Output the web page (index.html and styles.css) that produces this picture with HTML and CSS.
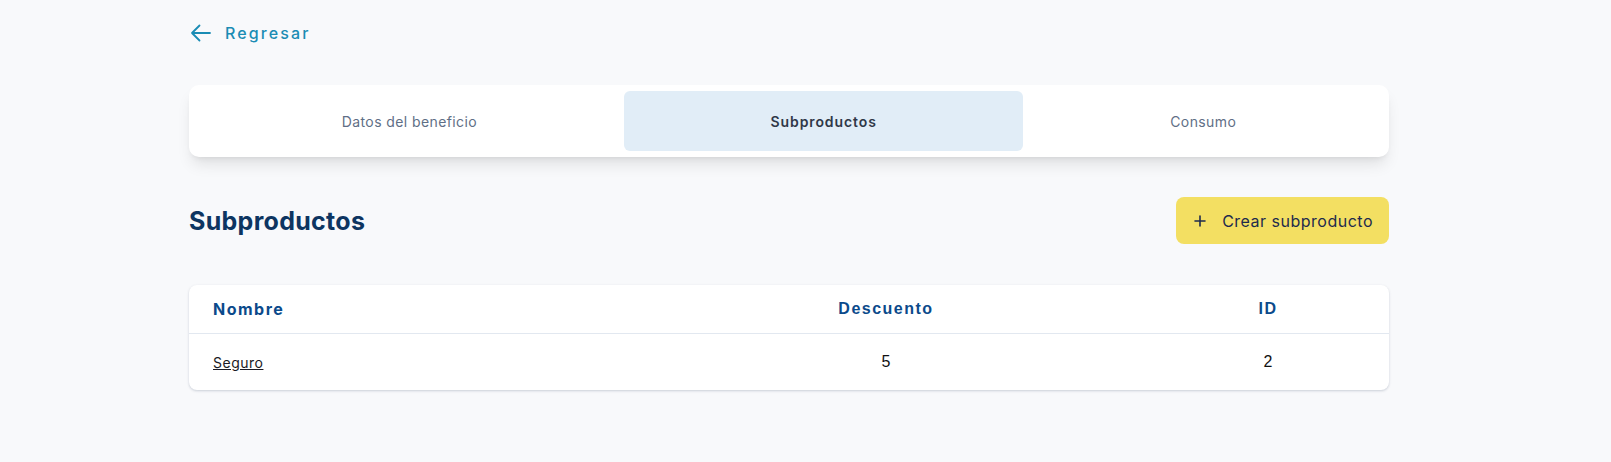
FILE: index.html
```html
<!DOCTYPE html>
<html lang="es">
<head>
<meta charset="utf-8">
<title>Subproductos</title>
<link rel="stylesheet" href="styles.css">
</head>
<body>
<main class="page">
  <a class="back" href="#">
    <svg class="back-icon" width="24" height="24" viewBox="0 0 24 24" fill="none" stroke="currentColor" stroke-width="1.8" stroke-linecap="round" stroke-linejoin="round"><path d="M10.5 19.5L3 12l7.5-7.5M3 12h18"/></svg>
    <span class="back-text">Regresar</span>
  </a>

  <nav class="tabs">
    <button class="tab">Datos del beneficio</button>
    <button class="tab tab-active">Subproductos</button>
    <button class="tab">Consumo</button>
  </nav>

  <div class="section-head">
    <h1 class="title">Subproductos</h1>
    <button class="btn-create">
      <svg class="plus" width="12" height="12" viewBox="0 0 12 12" fill="none" stroke="currentColor" stroke-width="1.6" stroke-linecap="round"><path d="M6 1v10M1 6h10"/></svg>
      <span>Crear subproducto</span>
    </button>
  </div>

  <div class="table-card">
    <div class="row row-head">
      <div class="cell cell-name">Nombre</div>
      <div class="cell cell-center alt">Descuento</div>
      <div class="cell cell-center alt">ID</div>
    </div>
    <div class="row row-body">
      <div class="cell cell-name"><a class="link" href="#">Seguro</a></div>
      <div class="cell cell-center num">5</div>
      <div class="cell cell-center num">2</div>
    </div>
  </div>
</main>
</body>
</html>
```

FILE: styles.css
```css
* { box-sizing: border-box; }

html, body {
  margin: 0;
  background: #f8f9fb;
}

body {
  font-family: Inter, "Noto Sans", sans-serif;
  color: #1e2b4d;
}

.page {
  width: 1200px;
  margin-left: 189px;
  padding-top: 21px;
  padding-bottom: 60px;
}

.back {
  display: flex;
  align-items: center;
  gap: 12px;
  height: 24px;
  color: #1a8cb4;
  text-decoration: none;
}

.back-icon { display: block; }

.back-text {
  font-size: 16px;
  font-weight: 500;
  letter-spacing: 2.1px;
  line-height: 24px;
}

.tabs {
  margin-top: 40px;
  display: flex;
  padding: 6px;
  background: #ffffff;
  border-radius: 10px;
  box-shadow: 0 10px 15px -3px rgba(0, 0, 0, 0.1), 0 4px 6px -4px rgba(0, 0, 0, 0.1);
}

.tab {
  flex: auto;
  height: 60px;
  border: 0;
  background: transparent;
  border-radius: 6px;
  font-family: Inter, "Noto Sans", sans-serif;
  font-size: 14px;
  letter-spacing: 0.4px;
  color: #5f6f86;
  cursor: pointer;
}

.tab-active {
  background: #e1edf7;
  color: #2f3848;
  font-weight: 600;
  letter-spacing: 0.9px;
}

.section-head {
  margin-top: 40px;
  display: flex;
  align-items: center;
  justify-content: space-between;
}

.title {
  margin: 0;
  font-size: 25px;
  font-weight: 700;
  letter-spacing: 0.3px;
  color: #0d3561;
  line-height: 32px;
}

.btn-create {
  display: flex;
  align-items: center;
  gap: 16px;
  height: 47px;
  padding: 0 16px 0 18px;
  border: 0;
  border-radius: 8px;
  background: #f3df62;
  color: #1e2b4d;
  font-family: Inter, "Noto Sans", sans-serif;
  font-size: 16px;
  letter-spacing: 0.5px;
  cursor: pointer;
}

.plus { display: block; }

.table-card {
  margin-top: 41px;
  background: #ffffff;
  border-radius: 8px;
  box-shadow: 0 1px 3px rgba(15, 35, 70, 0.14), 0 1px 2px rgba(15, 35, 70, 0.06);
  overflow: hidden;
}

.row {
  display: grid;
  grid-template-columns: 436px 522px 242px;
  align-items: center;
}

.row-head {
  height: 49px;
  border-bottom: 1px solid #e2e8f0;
}

.row-body {
  height: 56px;
}

.cell-name { padding-left: 24px; }

.cell-center { text-align: center; }

.row-head .cell-name {
  font-size: 16px;
  font-weight: 700;
  letter-spacing: 1.5px;
  color: #0b4a8b;
}

.alt {
  font-family: "Liberation Sans", Arial, sans-serif;
  font-size: 16px;
  font-weight: 700;
  letter-spacing: 1.5px;
  color: #0b4a8b;
}

.link {
  font-size: 14px;
  letter-spacing: 0.5px;
  color: #1a1a24;
  text-decoration: underline;
}

.num {
  font-family: "Liberation Sans", Arial, sans-serif;
  font-size: 16px;
  color: #111111;
}
```
